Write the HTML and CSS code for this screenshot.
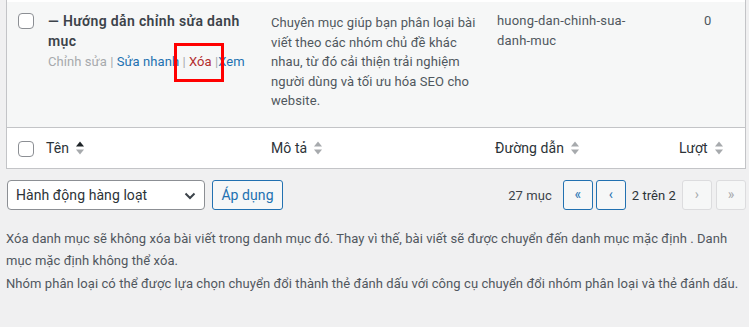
FILE: index.html
```html
<!DOCTYPE html>
<html lang="vi">
<head>
<meta charset="utf-8">
<title>Chuyên mục</title>
<link rel="stylesheet" href="styles.css">
</head>
<body>
<div class="wrap">
  <table class="list">
    <colgroup>
      <col class="c-cb"><col class="c-name"><col class="c-desc"><col class="c-slug"><col class="c-count">
    </colgroup>
    <tbody>
      <tr class="prev"><td colspan="5"></td></tr>
      <tr class="alt">
        <td class="cb"><span class="checkbox"></span></td>
        <td class="name">
          <div class="row-title">— Hướng dẫn chỉnh sửa danh<br>mục</div>
          <div class="row-actions">
            <span class="muted">Chỉnh sửa</span><span class="sep"> | </span><a class="link">Sửa nhanh</a><span class="mark"><span class="sep"> | </span><a class="link delete">Xóa</a><span class="sep"> |</span></span><a class="link">Xem</a>
          </div>
        </td>
        <td class="desc">Chuyên mục giúp bạn phân loại bài<br>viết theo các nhóm chủ đề khác<br>nhau, từ đó cải thiện trải nghiệm<br>người dùng và tối ưu hóa SEO cho<br>website.</td>
        <td class="slug">huong-dan-chinh-sua-<br>danh-muc</td>
        <td class="count">0</td>
      </tr>
    </tbody>
    <tfoot>
      <tr>
        <th class="cb"><span class="checkbox"></span></th>
        <th class="h-name">Tên<svg class="sort" viewBox="0 0 8 14" width="8" height="14"><polygon points="0,5.5 4,0.5 8,5.5" fill="#1d2327"/><polygon points="0,8.5 8,8.5 4,13.5" fill="#a7aaad"/></svg></th>
        <th class="h-desc">Mô tả<svg class="sort" viewBox="0 0 8 14" width="8" height="14"><polygon points="0,5.5 4,0.5 8,5.5" fill="#a7aaad"/><polygon points="0,8.5 8,8.5 4,13.5" fill="#a7aaad"/></svg></th>
        <th class="h-slug">Đường dẫn<svg class="sort" viewBox="0 0 8 14" width="8" height="14"><polygon points="0,5.5 4,0.5 8,5.5" fill="#a7aaad"/><polygon points="0,8.5 8,8.5 4,13.5" fill="#a7aaad"/></svg></th>
        <th class="h-count">Lượt<svg class="sort" viewBox="0 0 8 14" width="8" height="14"><polygon points="0,5.5 4,0.5 8,5.5" fill="#a7aaad"/><polygon points="0,8.5 8,8.5 4,13.5" fill="#a7aaad"/></svg></th>
      </tr>
    </tfoot>
  </table>

  <div class="tablenav">
    <div class="actions">
      <div class="select">
        <span>Hành động hàng loạt</span>
        <svg class="chev" viewBox="0 0 12 8" width="12" height="8"><polyline points="1.5,1.5 6,6 10.5,1.5" fill="none" stroke="#3c434a" stroke-width="2"/></svg>
      </div>
      <button class="btn">Áp dụng</button>
    </div>
    <div class="pages">
      <span class="num">27 mục</span>
      <span class="pbtn active first">«</span>
      <span class="pbtn active">‹</span>
      <span class="paging-text">2 trên 2</span>
      <span class="pbtn disabled">›</span>
      <span class="pbtn disabled last">»</span>
    </div>
  </div>

  <div class="notes">
    <p>Xóa danh mục sẽ không xóa bài viết trong danh mục đó. Thay vì thế, bài viết sẽ được chuyển đến danh mục mặc định . Danh mục mặc định không thể xóa.</p>
    <p>Nhóm phân loại có thể được lựa chọn chuyển đổi thành thẻ đánh dấu với công cụ chuyển đổi nhóm phân loại và thẻ đánh dấu.</p>
  </div>
</div>
</body>
</html>
```
FILE: styles.css
```css
body {
  margin: 0;
  background: #f0f0f1;
  font-family: Roboto, "Noto Sans", sans-serif;
  font-size: 13px;
  letter-spacing: 0.07px;
  color: #3c434a;
}
.wrap {
  padding-left: 6px;
  width: 740px;
}
.list {
  width: 740px;
  border: 1px solid #c3c4c7;
  border-top: 0;
  border-spacing: 0;
  table-layout: fixed;
  background: #fff;
}
.c-cb { width: 31px; }
.c-name { width: 223px; }
.c-desc { width: 226px; }
.c-slug { width: 182px; }
.c-count { width: 76px; }

.prev td { height: 2px; padding: 0; background: #fff; }
.alt { height: 125px; background: #f6f7f7; }
.alt td {
  vertical-align: top;
  padding: 9px 10px 0;
  line-height: 20px;
}
.alt td.cb { padding: 11px 0 0 11px; }
.checkbox {
  display: block;
  width: 16px;
  height: 16px;
  box-sizing: border-box;
  border: 1px solid #8c8f94;
  border-radius: 4px;
  background: #fff;
}
.row-title {
  font-size: 14px;
  font-weight: 600;
  letter-spacing: 0.35px;
  color: #3c434a;
  white-space: nowrap;
}
.row-actions {
  padding-top: 1px;
  font-size: 13px;
  white-space: nowrap;
}
.muted { color: #a7aaad; }
.sep { color: #a7aaad; }
.link { color: #2271b1; }
.delete { color: #b32d2e; }
.mark { position: relative; }
.mark::after {
  content: "";
  position: absolute;
  left: -5px;
  right: -6px;
  top: -11px;
  bottom: -13px;
  border: 3px solid #ff0000;
}
.alt td.desc {
  padding-top: 11px;
  line-height: 19.5px;
  letter-spacing: 0.1px;
  color: #50575e;
  white-space: nowrap;
}
.alt td.slug { color: #50575e; white-space: nowrap; letter-spacing: 0.2px; }
.alt td.count { padding-left: 35px; color: #50575e; }

tfoot th {
  border-top: 1px solid #c3c4c7;
  text-align: left;
  font-weight: 400;
  font-size: 14px;
  line-height: 20px;
  color: #2c3338;
  padding: 10px 8px 10px;
  vertical-align: top;
  white-space: nowrap;
}
tfoot th.cb { padding: 13px 0 0 11px; }
tfoot th.h-desc { padding-left: 10px; }
tfoot th.h-count { padding-left: 10px; }
.sort { vertical-align: -2px; margin-left: 7px; }

.tablenav {
  display: flex;
  justify-content: space-between;
  align-items: center;
  margin-top: 11px;
  height: 30px;
}
.actions { display: flex; align-items: center; gap: 7px; padding-left: 1px; }
.select {
  box-sizing: border-box;
  width: 198px;
  height: 30px;
  border: 1px solid #8c8f94;
  border-radius: 4px;
  background: #fff;
  display: flex;
  align-items: center;
  justify-content: space-between;
  padding: 0 8px;
  font-size: 14px;
  color: #2c3338;
}
.chev { margin-top: 1px; }
.btn {
  box-sizing: border-box;
  height: 30px;
  width: 71px;
  border: 1px solid #2271b1;
  border-radius: 3px;
  background: #f6f7f7;
  color: #2271b1;
  font-family: inherit;
  font-size: 14px;
  letter-spacing: 0.07px;
  padding: 0;
}
.pages { display: flex; align-items: center; gap: 3px; }
.num { font-size: 13px; color: #3c434a; margin-right: 8px; }
.paging-text { font-size: 13px; color: #2c3338; margin: 0 3px; }
.pbtn {
  box-sizing: border-box;
  width: 30px;
  height: 30px;
  border: 1px solid #2271b1;
  border-radius: 3px;
  background: #f6f7f7;
  color: #2271b1;
  display: flex;
  align-items: center;
  justify-content: center;
  font-size: 14px;
  line-height: 1;
  padding-bottom: 2px;
}
.pbtn.disabled {
  border-color: #dcdcde;
  color: #a7aaad;
}
.pbtn.last { margin-left: 1px; }

.notes { padding-top: 18px; }
.notes p {
  margin: 0 0 1px;
  line-height: 22px;
  font-size: 13px;
  color: #50575e;
}
.notes p + p { margin-top: 1px; }
```
